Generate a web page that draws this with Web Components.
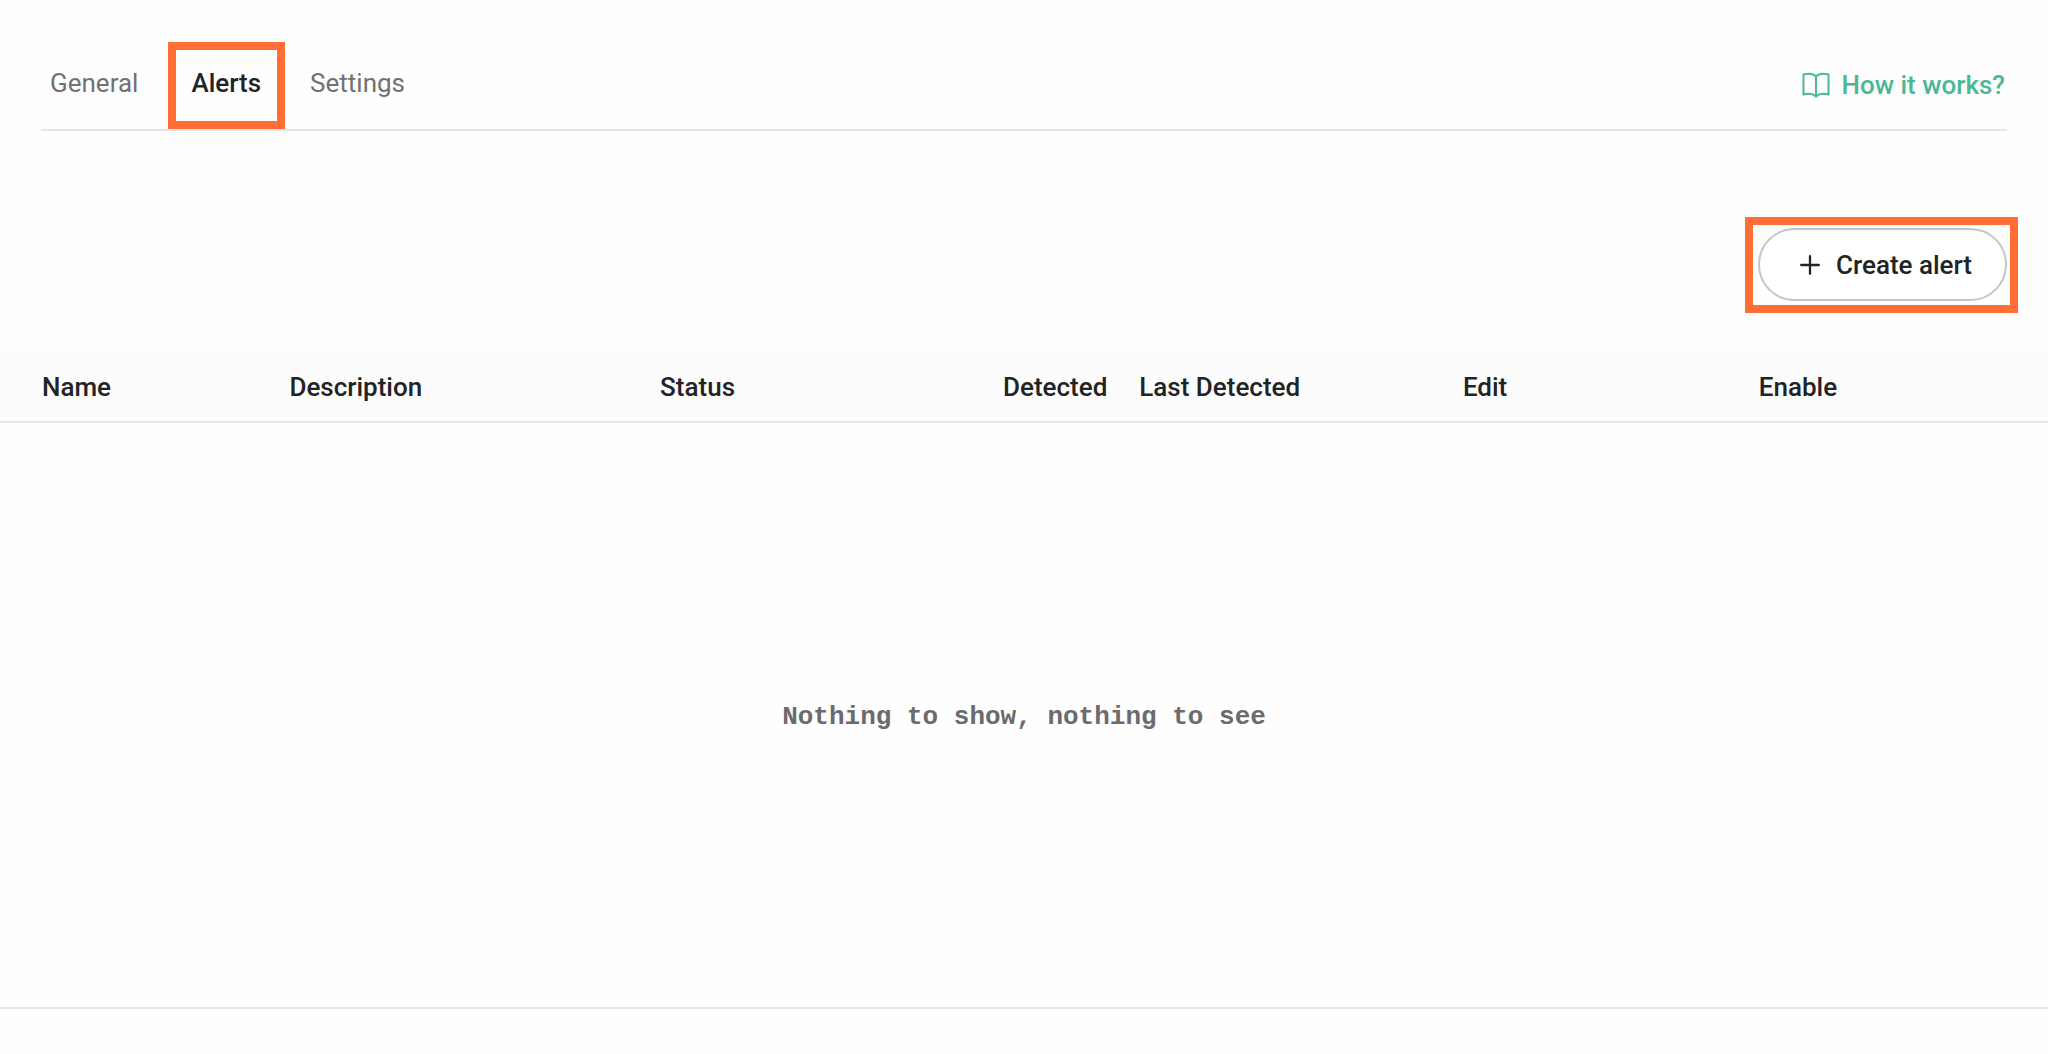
<!DOCTYPE html>
<html lang="en">
<head>
<meta charset="utf-8">
<title>Alerts</title>
<style>
  html, body { margin: 0; }
  body {
    --ink: #212324;
    --muted: #707172;
    --line: #e5e6e7;
    --accent: #4bb793;
    --mark: #ff6e35;
    background: #fefefe;
    color: var(--ink);
    font: 26px/32px Roboto, "Liberation Sans", sans-serif;
  }
</style>
</head>
<body>
<alerts-page>
  <tab-bar slot="nav">
    <tab-link href="#general">General</tab-link>
    <tab-link href="#alerts" current>Alerts</tab-link>
    <tab-link href="#settings">Settings</tab-link>
    <help-link slot="aside">How it works?</help-link>
  </tab-bar>
  <create-button slot="actions">Create alert</create-button>
  <alerts-table slot="content"></alerts-table>
  <empty-state slot="content">Nothing to show, nothing to see</empty-state>
</alerts-page>

<script>
const define = (name, markup) => customElements.define(name, class extends HTMLElement {
  constructor() {
    super();
    this.attachShadow({ mode: "open" }).innerHTML = markup;
  }
  connectedCallback() {
    const link = this.shadowRoot.querySelector("a");
    if (link && this.hasAttribute("href")) link.href = this.getAttribute("href");
    if (link && this.hasAttribute("current")) link.setAttribute("aria-current", "page");
  }
});

define("alerts-page", `
  <style>
    :host { display: flex; flex-direction: column; min-height: 100vh; box-sizing: border-box; padding: 42px 0 45px; }
    .nav { padding: 0 41px; }
    .actions { display: flex; justify-content: flex-end; padding: 86px 30px 37px; }
    main { flex: 1; display: flex; flex-direction: column; border-bottom: 2px solid var(--line); }
  </style>
  <header class="nav"><slot name="nav"></slot></header>
  <div class="actions"><slot name="actions"></slot></div>
  <main><slot name="content"></slot></main>
`);

define("tab-bar", `
  <style>
    :host { display: flex; justify-content: space-between; align-items: flex-start; border-bottom: 2px solid var(--line); }
    nav { display: flex; }
    .aside { padding: 27px 2px 0 0; }
  </style>
  <nav aria-label="Sections"><slot></slot></nav>
  <div class="aside"><slot name="aside"></slot></div>
`);

define("tab-link", `
  <style>
    :host { display: block; }
    a { display: block; box-sizing: border-box; height: 87px; padding: 25px 30px 0 9px; color: var(--muted); text-decoration: none; }
    :host([current]) { margin-right: 16px; border: 8px solid var(--mark); }
    :host([current]) a { height: 71px; padding: 17px 16px 0 15px; color: var(--ink); font-weight: 500; }
  </style>
  <a><slot></slot></a>
`);

define("help-link", `
  <style>
    :host { display: block; }
    a { display: flex; align-items: center; gap: 11px; color: var(--accent); font-weight: 500; text-decoration: none; }
    svg { display: block; }
  </style>
  <a href="#help">
    <svg width="28" height="26" viewBox="0 0 28 26" fill="none" stroke="currentColor" stroke-width="2" stroke-linejoin="round" aria-hidden="true">
      <path d="M14 4.500C11 1.500 5.500 1.500 1.500 2.500V22.500C5.500 21.500 11 21.500 14 24.500C17 21.500 22.500 21.500 26.500 22.500V2.500C22.500 1.500 17 1.500 14 4.500V24"/>
    </svg>
    <slot></slot>
  </a>
`);

define("create-button", `
  <style>
    :host { display: block; border: 8px solid var(--mark); padding: 3px 3px 4px 5px; }
    button { display: flex; align-items: center; gap: 16px; height: 73px; padding: 0 33px 0 40px; border: 2px solid #c1c6cc; border-radius: 37px; background: #fff; color: var(--ink); font: inherit; font-weight: 500; }
    svg { display: block; }
  </style>
  <button type="button">
    <svg width="20" height="20" viewBox="0 0 20 20" fill="none" stroke="currentColor" stroke-width="2.300" stroke-linecap="round" aria-hidden="true"><path d="M10 1.200V18.800M1.200 10H18.800"/></svg>
    <slot></slot>
  </button>
`);

define("alerts-table", `
  <style>
    :host { display: block; }
    table { width: 100%; table-layout: fixed; border-collapse: separate; border-spacing: 0; }
    th { box-sizing: border-box; height: 73px; padding: 2px 16px 0; background: #fcfcfc; border-bottom: 2px solid var(--line); text-align: left; font-weight: 500; white-space: nowrap; }
    th:first-child { padding-left: 42px; }
    .count { text-align: right; }
    .name { width: 13.35%; } .desc { width: 18.1%; } .status, .count { width: 11.7%; }
    .last { width: 15.8%; } .edit { width: 14.45%; }
  </style>
  <table>
    <thead><tr>
      <th scope="col" class="name">Name</th>
      <th scope="col" class="desc">Description</th>
      <th scope="col" class="status">Status</th>
      <th scope="col" class="count">Detected</th>
      <th scope="col" class="last">Last Detected</th>
      <th scope="col" class="edit">Edit</th>
      <th scope="col">Enable</th>
    </tr></thead>
  </table>
`);

define("empty-state", `
  <style>
    :host { flex: 1; display: flex; align-items: center; justify-content: center; }
    p { margin: 0; padding-top: 4px; color: #6b6b6b; font-family: "Liberation Mono", monospace; font-weight: 700; }
  </style>
  <p><slot></slot></p>
`);
</script>
</body>
</html>
